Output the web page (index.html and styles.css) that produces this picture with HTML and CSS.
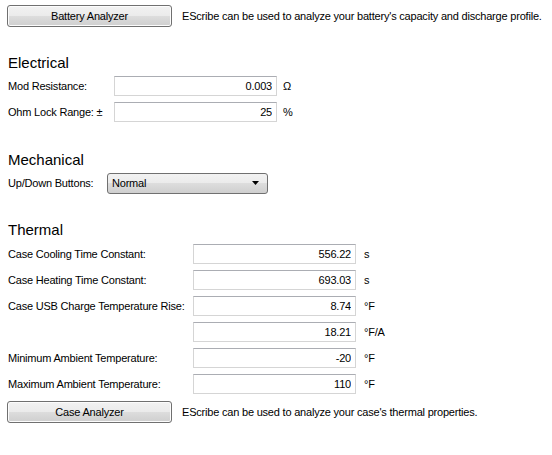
FILE: index.html
```html
<!DOCTYPE html>
<html lang="en">
  <head>
    <meta charset="UTF-8" />
    <title>Device Settings</title>
    <link rel="stylesheet" href="styles.css">
  </head>
  <body>
    <div class="tool-row">
      <button class="btn">Battery Analyzer</button>
      <span class="tool-note">EScribe can be used to analyze your battery's capacity and discharge profile.</span>
    </div>

    <section class="group group-electrical">
      <h2>Electrical</h2>
      <div class="field">
        <label>Mod Resistance:</label>
        <input class="box" type="text" value="0.003">
        <span class="unit">Ω</span>
      </div>
      <div class="field">
        <label>Ohm Lock Range: ±</label>
        <input class="box" type="text" value="25">
        <span class="unit">%</span>
      </div>
    </section>

    <section class="group group-mechanical">
      <h2>Mechanical</h2>
      <div class="field">
        <label>Up/Down Buttons:</label>
        <div class="combo">
          <span>Normal</span>
          <svg class="combo-arrow" viewBox="0 0 7 4"><path d="M0 0h7L3.5 4z"></path></svg>
        </div>
      </div>
    </section>

    <section class="group group-thermal">
      <h2>Thermal</h2>
      <div class="field">
        <label>Case Cooling Time Constant:</label>
        <input class="box" type="text" value="556.22">
        <span class="unit">s</span>
      </div>
      <div class="field">
        <label>Case Heating Time Constant:</label>
        <input class="box" type="text" value="693.03">
        <span class="unit">s</span>
      </div>
      <div class="field">
        <label>Case USB Charge Temperature Rise:</label>
        <input class="box" type="text" value="8.74">
        <span class="unit">°F</span>
      </div>
      <div class="field">
        <label></label>
        <input class="box" type="text" value="18.21">
        <span class="unit">°F/A</span>
      </div>
      <div class="field">
        <label>Minimum Ambient Temperature:</label>
        <input class="box" type="text" value="-20">
        <span class="unit">°F</span>
      </div>
      <div class="field">
        <label>Maximum Ambient Temperature:</label>
        <input class="box" type="text" value="110">
        <span class="unit">°F</span>
      </div>
    </section>

    <div class="tool-row tool-row-last">
      <button class="btn">Case Analyzer</button>
      <span class="tool-note">EScribe can be used to analyze your case's thermal properties.</span>
    </div>
  </body>
</html>
```

FILE: styles.css
```css
*,
*::before,
*::after {
  box-sizing: border-box;
  margin: 0;
  padding: 0;
}

body {
  background-color: #fff;
  color: #000;
  font-family: "Liberation Sans", Arial, sans-serif;
  font-size: 11px;
  letter-spacing: -0.2px;
  white-space: nowrap;
  padding: 5px 0 0 7px;
}

.tool-row {
  display: flex;
  align-items: center;
  gap: 10px;
}

.tool-row-last {
  margin-top: 7px;
}

.btn {
  width: 165px;
  height: 22px;
  border: 1px solid #707070;
  border-radius: 3px;
  background: linear-gradient(#f2f2f2 0%, #ebebeb 49%, #dddddd 50%, #cfcfcf 100%);
  box-shadow: inset 0 0 0 1px #fcfcfc;
  font: inherit;
  letter-spacing: inherit;
  color: #000;
}

.group h2 {
  font-size: 15px;
  font-weight: normal;
  letter-spacing: 0;
  line-height: 18px;
  margin-left: 1px;
  margin-bottom: 4px;
}

.group-electrical {
  margin-top: 27px;
}

.group-mechanical {
  margin-top: 29px;
}

.group-thermal {
  margin-top: 28px;
}

.group-thermal h2 {
  margin-bottom: 5px;
}

.field {
  display: flex;
  align-items: center;
  height: 20px;
  margin-bottom: 6px;
}

.field label {
  padding-left: 1px;
}

.group-electrical label {
  width: 107px;
}

.group-mechanical label {
  width: 100px;
}

.group-thermal label {
  width: 186px;
}

.box {
  width: 163px;
  height: 20px;
  border: 1px solid #d5d5d5;
  border-top-color: #abadb3;
  background: #fff;
  font: inherit;
  letter-spacing: inherit;
  text-align: right;
  padding: 0 4px;
  color: #000;
}

.unit {
  margin-left: 8px;
}

.group-electrical .unit {
  margin-left: 6px;
}

.combo {
  display: flex;
  align-items: center;
  justify-content: space-between;
  width: 161px;
  height: 21px;
  border: 1px solid #707070;
  border-radius: 3px;
  background: linear-gradient(#f2f2f2 0%, #ebebeb 49%, #dddddd 50%, #cfcfcf 100%);
  padding: 0 8px 0 4px;
}

.combo-arrow {
  width: 7px;
  height: 4px;
  fill: #000;
}
```
